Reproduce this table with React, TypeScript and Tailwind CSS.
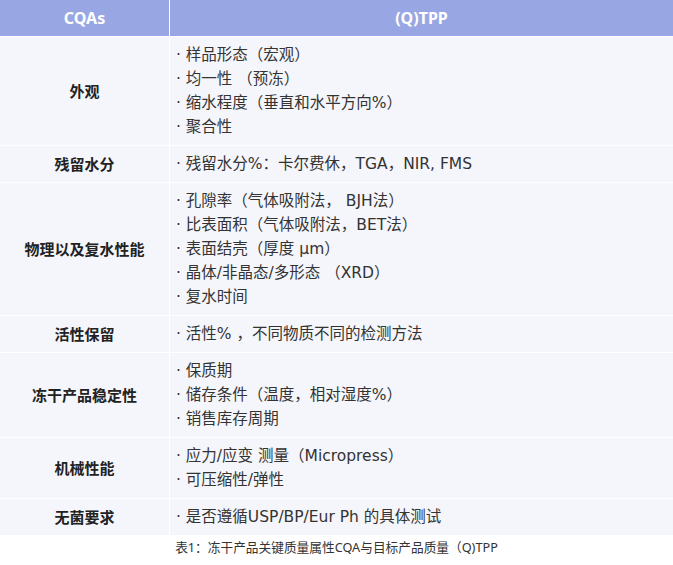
import React from "react";

const rows: { label: string; items: string[] }[] = [
  { label: "外观", items: ["样品形态（宏观）", "均一性 （预冻）", "缩水程度（垂直和水平方向%）", "聚合性"] },
  { label: "残留水分", items: ["残留水分%：卡尔费休，TGA，NIR, FMS"] },
  {
    label: "物理以及复水性能",
    items: ["孔隙率（气体吸附法， BJH法）", "比表面积（气体吸附法，BET法）", "表面结壳（厚度 μm）", "晶体/非晶态/多形态 （XRD）", "复水时间"],
  },
  { label: "活性保留", items: ["活性% ，不同物质不同的检测方法"] },
  { label: "冻干产品稳定性", items: ["保质期", "储存条件（温度，相对湿度%）", "销售库存周期"] },
  { label: "机械性能", items: ["应力/应变 测量（Micropress）", "可压缩性/弹性"] },
  { label: "无菌要求", items: ["是否遵循USP/BP/Eur Ph 的具体测试"] },
];

export default function App() {
  return (
    <div
      className="w-[673px] h-[565px] bg-white text-[#333]"
      style={{ fontFamily: '"Noto Sans", "Noto Sans CJK SC", sans-serif' }}
    >
      <div className="grid grid-cols-[169px_1fr] gap-px bg-white">
        <div className="h-[36px] bg-[#99a6e4] flex items-center justify-center text-white font-bold text-[16px]">
          CQAs
        </div>
        <div className="h-[36px] bg-[#99a6e4] flex items-center justify-center text-white font-bold text-[16px]">
          (Q)TPP
        </div>
        {rows.map((r) => (
          <React.Fragment key={r.label}>
            <div className="bg-[#f5f6fb] flex items-center justify-center font-bold text-[15px] text-[#222]">
              {r.label}
            </div>
            <div
              className="bg-[#f5f6fb] py-[6px] pl-[6px] text-[15.5px] leading-[24px]"
              style={{ fontFamily: '"DejaVu Sans", "Noto Sans CJK SC", sans-serif' }}
            >
              {r.items.map((it) => (
                <div key={it} className="whitespace-pre">
                  {"· " + it}
                </div>
              ))}
            </div>
          </React.Fragment>
        ))}
      </div>
      <div className="mt-[3px] text-center text-[12.7px] leading-[18px] text-[#333]">
        表1：冻干产品关键质量属性CQA与目标产品质量（Q)TPP
      </div>
    </div>
  );
}
